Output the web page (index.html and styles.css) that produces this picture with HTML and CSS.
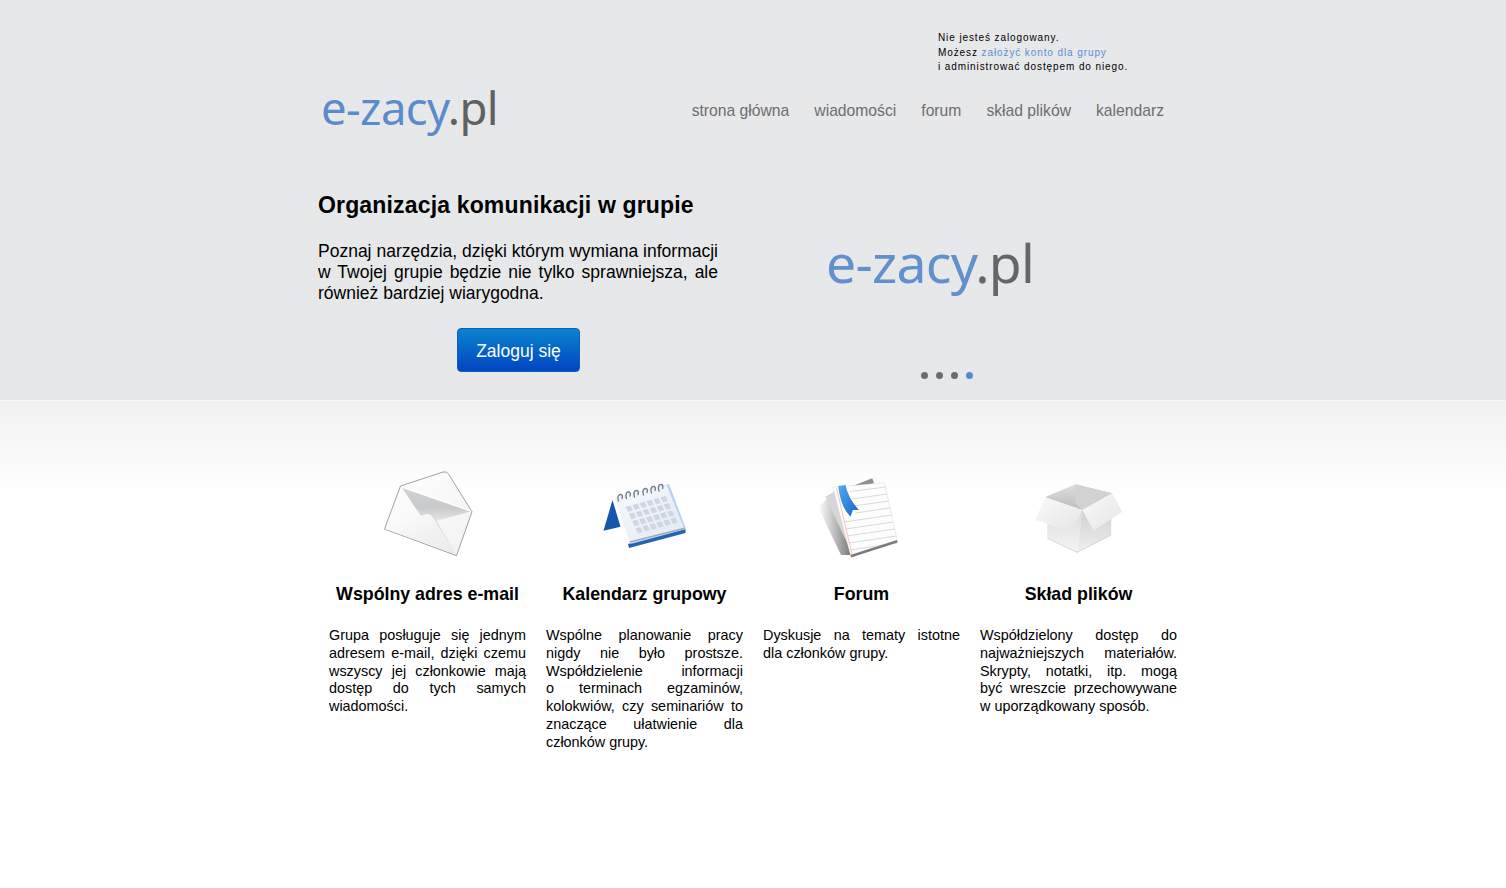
FILE: index.html
```html
<!DOCTYPE html>
<html lang="pl">
<head>
<meta charset="utf-8">
<title>e-zacy.pl</title>
<link rel="stylesheet" href="styles.css">
</head>
<body>
<header class="hero">
  <div class="wrap">
    <p class="login">Nie jesteś zalogowany.<br>Możesz <a href="#">założyć konto dla grupy</a><br>i administrować dostępem do niego.</p>
    <div class="topbar">
      <a class="logo" href="#"><span class="logo-blue">e-zacy</span><span class="logo-gray">.pl</span></a>
      <nav class="nav">
        <a href="#">strona główna</a>
        <a href="#">wiadomości</a>
        <a href="#">forum</a>
        <a href="#">skład plików</a>
        <a href="#">kalendarz</a>
      </nav>
    </div>
    <div class="showcase">
      <div class="intro">
        <h1>Organizacja komunikacji w grupie</h1>
        <p>Poznaj narzędzia, dzięki którym wymiana informacji w Twojej grupie będzie nie tylko sprawniejsza, ale również bardziej wiarygodna.</p>
        <a class="btn" href="#">Zaloguj się</a>
      </div>
      <div class="slide">
        <div class="logo logo-big"><span class="logo-blue">e-zacy</span><span class="logo-gray">.pl</span></div>
        <div class="dots"><i></i><i></i><i></i><i class="on"></i></div>
      </div>
    </div>
  </div>
</header>
<main class="features">
  <section class="feature">
    <svg class="icon" viewBox="0 0 90 90" aria-hidden="true">
      <defs>
        <linearGradient id="e1" x1="0" y1="0" x2="0" y2="1"><stop offset="0" stop-color="#d2d3d4"/><stop offset=".6" stop-color="#c8c9ca"/><stop offset="1" stop-color="#e6e6e6"/></linearGradient>
        <linearGradient id="e2" x1="0" y1="0" x2="1" y2="1"><stop offset="0" stop-color="#fdfdfd"/><stop offset="1" stop-color="#e9e9e9"/></linearGradient>
        <linearGradient id="e3" x1="0" y1="0" x2="1" y2="1"><stop offset="0" stop-color="#fff"/><stop offset="1" stop-color="#f1f1f1"/></linearGradient>
      </defs>
      <path d="M1.500 59 L17.500 16 L60 2 Q63.500 1 65.500 4 L89 41.700 L73.500 85.700 Z" fill="url(#e3)" stroke="#8a8a8a" stroke-width=".8" stroke-linejoin="round"/>
      <path d="M19 18 L87.500 41.500 L53 51 L46 44 L38 46 Z" fill="url(#e1)"/>
      <path d="M2.500 59 L42 44.500 Q46.500 43 49 46 L73 84.500 Z" fill="url(#e2)"/>
      <path d="M46 44 Q50 44 53 50 L73 84 L49 46 Z" fill="#d8d8d8"/>
      <path d="M19 16.500 L88 41" stroke="#fff" stroke-width="1.300"/>
    </svg>
    <h2>Wspólny adres e-mail</h2>
    <p>Grupa posługuje się jednym adresem e-mail, dzięki czemu wszyscy jej członkowie mają dostęp do tych samych wiadomości.</p>
  </section>
  <section class="feature">
    <svg class="icon" viewBox="0 0 90 90" aria-hidden="true">
      <defs>
        <linearGradient id="c1" x1="0" y1="0" x2="1" y2="1"><stop offset="0" stop-color="#f7fafd"/><stop offset="1" stop-color="#e3eaf4"/></linearGradient>
        <pattern id="cg" width="1" height="1" patternUnits="userSpaceOnUse" patternTransform="matrix(7 -1.900 3.300 7.200 25.500 36.700)">
          <rect width=".72" height=".72" fill="#cfd6e2"/>
        </pattern>
      </defs>
      <path d="M12.500 30 L3.500 60.700 L20.500 56.700 Z" fill="#1557ab"/>
      <path d="M29 78 L85.500 63 L85.500 59 L28 74 Z" fill="#2463b3"/>
      <path d="M15.500 28 L69 14 L86 59 L31 74 Z" fill="#b7d0f0"/>
      <path d="M15.500 28 L66.500 15 L84.500 59 L30.500 72.500 Z" fill="url(#c1)"/>
      <path d="M29 71.500 L84.500 57.500 L84.500 59 L30.500 72.500 Z" fill="#9aa6b5"/>
      <path d="M25.500 36.700 L67.500 25.300 L80.700 54.100 L38.700 65.500 Z" fill="url(#cg)"/>
      <g fill="none" stroke="#767d88" stroke-width="1.400" stroke-linecap="round">
        <path d="M18.500 31c-1.500-4 0-7 2.500-6.500 1.500.4 1.700 2.300 1 4"/>
        <path d="M26.500 28.500c-1.500-4 0-7 2.500-6.500 1.500.4 1.700 2.300 1 4"/>
        <path d="M34.500 27c-1.500-4 0-7 2.500-6.500 1.500.4 1.700 2.300 1 4"/>
        <path d="M43.500 25c-1.500-4 0-7 2.500-6.500 1.500.4 1.700 2.300 1 4"/>
        <path d="M51.500 23c-1.500-4 0-7 2.500-6.500 1.500.4 1.700 2.300 1 4"/>
        <path d="M59 21c-1.500-4 0-7 2.500-6.500 1.500.4 1.700 2.300 1 4"/>
      </g>
    </svg>
    <h2>Kalendarz grupowy</h2>
    <p>Wspólne planowanie pracy nigdy nie było prostsze. Współdzielenie informacji o&nbsp;terminach egzaminów, kolokwiów, czy seminariów to znaczące ułatwienie dla członków grupy.</p>
  </section>
  <section class="feature">
    <svg class="icon" viewBox="0 0 90 90" aria-hidden="true">
      <defs>
        <linearGradient id="r1" x1="0" y1="0" x2="1" y2="1"><stop offset="0" stop-color="#56a8ef"/><stop offset="1" stop-color="#0f66c9"/></linearGradient>
        <linearGradient id="f1" x1="1" y1="0" x2="0" y2="0"><stop offset="0" stop-color="#555" stop-opacity=".8"/><stop offset="1" stop-color="#666" stop-opacity="0"/></linearGradient>
      </defs>
      <path d="M1 37 L24 85 L34 85 L16 24 Z" fill="url(#f1)"/>
      <path d="M8.500 26.700 L55.200 8.300 L57 13 L15 30 Z" fill="#8e8e8e"/>
      <path d="M8.500 26.700 L20 20 L38 86 L36.800 87.300 Z" fill="#d6d6d6"/>
      <path d="M15.800 17.300 L67.500 12.700 L80.200 70 L33.500 85 Z" fill="#fdfdfd" stroke="#d0d0d0" stroke-width=".4"/>
      <g stroke="#ced1d5" stroke-width=".8">
        <path d="M33 21.500 L68.500 17"/><path d="M35 29 L70 24"/><path d="M37 36 L71.500 31"/><path d="M39 43 L73 38"/><path d="M27 52 L74.500 45"/><path d="M28.500 59 L76 52"/><path d="M30 66 L77.500 59"/><path d="M31.500 73 L79 66"/><path d="M33 80 L80 73"/>
      </g>
      <path d="M19.500 18 L35 84" stroke="#f3b89f" stroke-width=".8"/>
      <path d="M33.500 85 L80.200 70 L80.500 72.500 L34 87.500 Z" fill="#7a7a7a"/>
      <path d="M21.200 16 L28.500 15 Q31 28 41.800 40 L35.800 40 L33.500 46.700 Q23.500 37 21.200 16 Z" fill="url(#r1)"/>
    </svg>
    <h2>Forum</h2>
    <p>Dyskusje na tematy istotne dla&nbsp;członków grupy.</p>
  </section>
  <section class="feature">
    <svg class="icon" viewBox="0 0 90 90" aria-hidden="true">
      <defs>
        <linearGradient id="b1" x1="0" y1="0" x2="0" y2="1"><stop offset="0" stop-color="#dedede"/><stop offset="1" stop-color="#bcbcbc"/></linearGradient>
        <linearGradient id="b2" x1="0" y1="0" x2="1" y2="1"><stop offset="0" stop-color="#fafafa"/><stop offset="1" stop-color="#e4e4e4"/></linearGradient>
        <linearGradient id="b3" x1="0" y1="0" x2="0" y2="1"><stop offset="0" stop-color="#dcdcdc"/><stop offset="1" stop-color="#f5f5f5"/></linearGradient>
        <linearGradient id="b4" x1="0" y1="0" x2="0" y2="1"><stop offset="0" stop-color="#cfcfcf"/><stop offset="1" stop-color="#f0f0f0"/></linearGradient>
      </defs>
      <path d="M10.800 27.300 L41.500 14.300 L78.200 23.300 L48.200 40 Z" fill="url(#b1)"/>
      <path d="M41.500 14.300 L41.500 33 L48.200 40 L78.200 23.300 Z" fill="#d2d2d2"/>
      <path d="M13.200 50 L48.200 40 L43.200 82.300 L13.200 68.300 Z" fill="url(#b3)"/>
      <path d="M48.200 40 L77.200 40 L77.200 65 L43.200 82.300 Z" fill="url(#b4)"/>
      <path d="M13.200 68.300 L43.200 82.300 L77.200 65" fill="none" stroke="#b5b5b5" stroke-width=".5"/>
      <path d="M10.800 27.300 L48.200 40 L38.200 61.700 L1.500 50 Z" fill="url(#b2)"/>
      <path d="M48.200 40 L78.200 23.300 L88.200 41.700 L59.800 60.700 Z" fill="url(#b2)"/>
    </svg>
    <h2>Skład plików</h2>
    <p>Współdzielony dostęp do najważniejszych materiałów. Skrypty, notatki, itp. mogą być&nbsp;wreszcie przechowywane w&nbsp;uporządkowany sposób.</p>
  </section>
</main>
</body>
</html>
```

FILE: styles.css
```css
* { box-sizing: border-box; }
html, body { margin: 0; padding: 0; }
body {
  min-height: 888px;
  background: #fff;
  color: #000;
  font-family: "Liberation Sans", Arial, sans-serif;
}
a { text-decoration: none; }
.hero {
  height: 401px;
  border-bottom: 1px solid #fafafa;
  background-color: #e6e7e9;
  background-image:
    repeating-linear-gradient(0deg, rgba(255,255,255,.07) 0 1px, transparent 1px 5px),
    repeating-linear-gradient(90deg, rgba(255,255,255,.07) 0 1px, transparent 1px 6px);
}
.wrap { width: 868px; margin: 0 auto; }
.login {
  margin: 0 0 0 619px;
  padding-top: 31px;
  font-size: 10px;
  line-height: 14.500px;
  letter-spacing: .9px;
}
.login a { color: #5a8fd2; }
.topbar {
  display: flex;
  align-items: center;
  justify-content: space-between;
  margin-top: 2px;
  height: 60px;
  padding-right: 23px;
}
.logo {
  display: block;
  margin-left: 2px;
  font-family: "Noto Sans", "Open Sans", sans-serif;
  font-size: 45.500px;
  line-height: 60px;
  letter-spacing: -.6px;
}
.logo-blue { color: #5a8ccb; }
.logo-gray { color: #5f6062; }
.nav { display: flex; gap: 25px; font-size: 15.700px; padding-top: 9px; }
.nav a { color: #6d6e70; }
.showcase { display: flex; margin-top: 53px; }
.intro { width: 400px; margin-left: -1px; }
.intro h1 {
  margin: 0;
  font-size: 23px;
  line-height: 30px;
  font-weight: 700;
  letter-spacing: .16px;
}
.intro p {
  margin: 21px 0 0;
  font-size: 17.500px;
  line-height: 21.300px;
  text-align: justify;
}
.btn {
  display: block;
  width: 123px;
  height: 44px;
  margin: 23.600px 0 0 139px;
  border: 1px solid #0d5fbc;
  border-radius: 4px;
  background: linear-gradient(#0a84ce, #0145c3);
  color: #fff;
  font-size: 17.500px;
  line-height: 44px;
  text-align: center;
}
.slide { flex: 1; padding-left: 108px; }
.logo-big {
  margin: 38px 0 0;
  font-size: 53.500px;
  line-height: 70px;
  letter-spacing: -.7px;
  opacity: .95;
}
.dots { display: flex; gap: 8px; margin: 74px 0 0 95px; }
.dots i { width: 7px; height: 7px; border-radius: 50%; background: #6b6c6f; }
.dots i.on { background: #4f8bcd; }
.features {
  display: flex;
  justify-content: center;
  gap: 20px;
  height: 487px;
  padding-top: 69px;
  background: linear-gradient(#f1f1f1, #fff 95px);
}
.feature { width: 197px; }
.icon { display: block; width: 90px; height: 90px; margin: 0 auto; filter: blur(.3px); }
.feature h2 {
  margin: 23px 0 0;
  font-size: 17.800px;
  line-height: 22px;
  font-weight: 700;
  text-align: center;
}
.feature p {
  margin: 22px 0 0;
  font-size: 14.400px;
  line-height: 17.800px;
  text-align: justify;
}
```
